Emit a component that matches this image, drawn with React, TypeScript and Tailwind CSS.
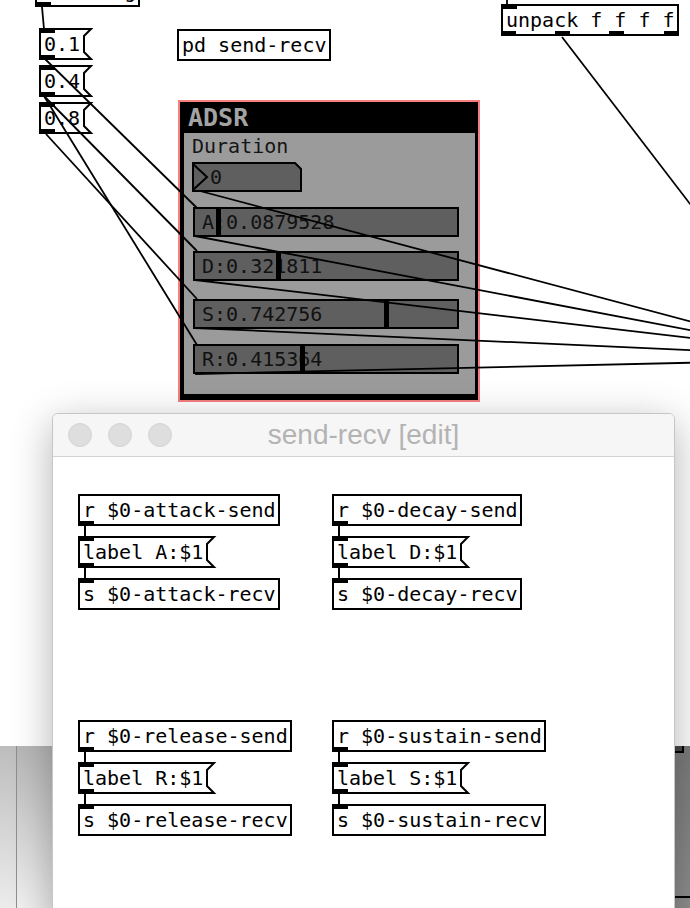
import React from 'react';

const mono = "font-['DejaVu_Sans_Mono',monospace]";

function Iolet({ pos }: { pos: 'in' | 'out' }) {
  return (
    <span
      className={`absolute -left-[2px] h-[5px] w-[16px] bg-black ${pos === 'in' ? '-top-[2px]' : '-bottom-[2px]'}`}
    />
  );
}

function Obj({ text, inlet = false, outlet = false }: { text: string; inlet?: boolean; outlet?: boolean }) {
  return (
    <div
      className={`relative h-[32px] w-fit border-2 border-black bg-white pl-[3px] pr-[2px] text-[20px] leading-[28px] whitespace-pre text-black ${mono}`}
    >
      {text}
      {inlet && <Iolet pos="in" />}
      {outlet && <Iolet pos="out" />}
    </div>
  );
}

function Msg({ text }: { text: string }) {
  return (
    <div className="relative flex h-[32px] w-fit">
      <div
        className={`relative border-y-2 border-l-2 border-black bg-white pl-[3px] pr-[3px] text-[20px] leading-[28px] whitespace-pre text-black ${mono}`}
      >
        {text}
        <Iolet pos="in" />
        <Iolet pos="out" />
      </div>
      <svg width="9" height="32" className="shrink-0 overflow-visible">
        <polyline points="0,1 8,1 1,8 1,24 8,31 0,31" fill="none" stroke="black" strokeWidth="2" />
      </svg>
    </div>
  );
}

// vertical patch cord between two stacked boxes
function Cord() {
  return <div className="ml-[6px] h-[10px] w-[2px] bg-black" />;
}

function Stack({ name, letter }: { name: string; letter: string }) {
  return (
    <div className="flex flex-col">
      <Obj text={`r $0-${name}-send`} outlet />
      <Cord />
      <Msg text={`label ${letter}:$1`} />
      <Cord />
      <Obj text={`s $0-${name}-recv`} inlet />
    </div>
  );
}

const sliders = [
  { label: 'A:0.0879528', value: 0.0879528, mt: 'mt-[15px]' },
  { label: 'D:0.321811', value: 0.321811, mt: 'mt-[14px]' },
  { label: 'S:0.742756', value: 0.742756, mt: 'mt-[18px]' },
  { label: 'R:0.415364', value: 0.415364, mt: 'mt-[15px]' },
];

function Slider({ label, value, mt }: { label: string; value: number; mt: string }) {
  return (
    <div
      className={`relative ml-[1px] h-[30px] w-[266px] border-2 border-black bg-[#5f5f5f] pl-[7px] text-[20px] leading-[26px] text-[#111] ${mono} ${mt}`}
    >
      {label}
      <span className="absolute top-0 bottom-0 w-[5px] bg-black" style={{ left: value * 256.6 - 1.6 }} />
    </div>
  );
}

function Adsr() {
  return (
    <div className="absolute left-[178px] top-[100px] h-[302px] w-[302px] border-2 border-[#f47f7f] bg-black">
      <div className={`h-[31px] pl-[8px] text-[25px] font-bold leading-[31px] text-[#a3a3a3] ${mono}`}>ADSR</div>
      <div className="ml-[4px] mr-[3px] h-[261px] bg-[#9b9b9b] pl-[8px] pt-[1px]">
        <div className={`text-[20px] leading-[24px] text-[#151515] ${mono}`}>Duration</div>
        <div className={`relative mt-[4px] h-[30px] w-[110px] pl-[18px] text-[20px] leading-[30px] text-[#111] ${mono}`}>
          <svg width="110" height="30" className="absolute left-0 top-0">
            <polygon points="1,1 103,1 109,7 109,29 1,29" fill="#5f5f5f" stroke="black" strokeWidth="2" />
            <polyline points="1,2 15,15 1,28" fill="none" stroke="black" strokeWidth="2" />
          </svg>
          <span className="relative">0</span>
        </div>
        {sliders.map((s) => (
          <Slider key={s.label} {...s} />
        ))}
      </div>
    </div>
  );
}

const cords: [number, number, number, number][] = [
  [42, 7, 44, 29],
  [44, 58, 197, 208],
  [44, 96, 197, 251],
  [44, 96, 197, 345],
  [46, 134, 197, 299],
  [200, 191, 700, 324],
  [195, 236, 700, 332],
  [195, 280, 700, 339],
  [195, 328, 700, 350.5],
  [195, 374, 700, 362.5],
  [562, 37, 720, 243],
  [507, 0, 507, 5],
];

function BackgroundPatch() {
  return (
    <div className="relative h-[746px] bg-white">
      <div className="absolute left-[35px] top-[-25px]">
        <Obj text="loadbang" inlet outlet />
      </div>
      <div className="absolute left-[39px] top-[28px]">
        <Msg text="0.1" />
      </div>
      <div className="absolute left-[39px] top-[65px]">
        <Msg text="0.4" />
      </div>
      <div className="absolute left-[39px] top-[102px]">
        <Msg text="0.8" />
      </div>
      <div className="absolute left-[177px] top-[29px]">
        <Obj text="pd send-recv" />
      </div>
      <div className="absolute left-[501px] top-[4px]">
        <div className="relative">
          <Obj text="unpack f f f f" inlet />
          <div className="absolute bottom-0 left-0 right-0 flex justify-between">
            <span className="h-[5px] w-[15px] bg-black" />
            <span className="h-[5px] w-[15px] bg-black" />
            <span className="h-[5px] w-[15px] bg-black" />
            <span className="h-[5px] w-[15px] bg-black" />
          </div>
        </div>
      </div>
      <Adsr />
      <svg className="pointer-events-none absolute left-0 top-0" width="690" height="746">
        {cords.map(([x1, y1, x2, y2], i) => (
          <line key={i} x1={x1} y1={y1} x2={x2} y2={y2} stroke="black" strokeWidth="1.8" />
        ))}
      </svg>
    </div>
  );
}

function Window() {
  return (
    <div className="absolute left-[52px] top-[413px] h-[520px] w-[623px] overflow-hidden rounded-t-[6px] border border-[#c6c6c6] bg-white shadow-[0_10px_40px_rgba(0,0,0,0.3)]">
      <div className="grid h-[43px] grid-cols-[1fr_auto_1fr] items-center border-b border-[#d2d2d2] bg-[#f6f6f6]">
        <div className="flex gap-[16px] pl-[15px]">
          <span className="h-[24px] w-[24px] rounded-full border border-[#d3d3d3] bg-[#dedede]" />
          <span className="h-[24px] w-[24px] rounded-full border border-[#d3d3d3] bg-[#dedede]" />
          <span className="h-[24px] w-[24px] rounded-full border border-[#d3d3d3] bg-[#dedede]" />
        </div>
        <div className="font-['Liberation_Sans',Arial,sans-serif] text-[28px] text-[#b3b3b3]">send-recv [edit]</div>
        <div />
      </div>
      <div className="grid grid-cols-[254px_auto] grid-rows-[226px_auto] pl-[25px] pt-[37px]">
        <Stack name="attack" letter="A" />
        <Stack name="decay" letter="D" />
        <Stack name="release" letter="R" />
        <Stack name="sustain" letter="S" />
      </div>
    </div>
  );
}

export default function App() {
  return (
    <div className="relative h-[908px] w-[690px] overflow-hidden bg-white">
      <BackgroundPatch />
      <div className="flex h-[162px]">
        <div className="w-[17px] border-r border-[#8f8f8f] bg-linear-to-b from-[#bdbdbd] to-[#ececec]" />
        <div className="flex-1 bg-linear-to-b from-[#b6b6b6] to-[#f1f1f1]" />
        <div className="relative w-[15px] bg-linear-to-b from-[#7b7b7b] to-[#8f8f8f]">
          <div className="h-[7px] w-[9px] border-r-2 border-b-2 border-black bg-[#474747]" />
          <div className="mt-[143px] h-[2px] bg-black" />
        </div>
      </div>
      <Window />
    </div>
  );
}
